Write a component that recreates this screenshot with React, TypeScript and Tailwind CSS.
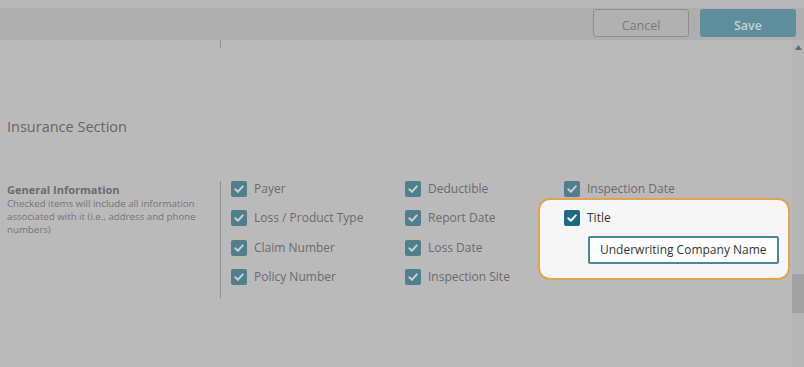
import React from 'react'

function Box({ dark = false }: { dark?: boolean }) {
  return (
    <span
      className={`flex h-4 w-4 shrink-0 items-center justify-center rounded-[2px] ${
        dark ? 'bg-[#1d6a85]' : 'bg-[#4f7f8d]'
      }`}
    >
      <svg width="12" height="12" viewBox="0 0 12 12" fill="none">
        <path
          d="M2.3 6.2 L4.9 8.7 L9.8 3.4"
          stroke={dark ? '#ffffff' : '#c6cfd2'}
          strokeWidth="2"
          strokeLinecap="round"
          strokeLinejoin="round"
        />
      </svg>
    </span>
  )
}

function Item({ label }: { label: string }) {
  return (
    <div className="flex h-[29.5px] items-center gap-[7px]">
      <Box />
      <span className="text-[12px] text-[#6b6a6b]">{label}</span>
    </div>
  )
}

export default function App() {
  const cols = [
    ['Payer', 'Loss / Product Type', 'Claim Number', 'Policy Number'],
    ['Deductible', 'Report Date', 'Loss Date', 'Inspection Site'],
  ]
  return (
    <div
      className="relative flex h-[367px] w-[804px] flex-col overflow-hidden bg-[#bbbabb]"
      style={{ fontFamily: '"Open Sans", sans-serif' }}
    >
      <div className="h-[8px] bg-[#b9b8b9]" />
      <header className="flex h-[32px] items-start justify-end gap-[11px] bg-[#afaeaf] pr-[8px] pt-[1px]">
        <button className="h-[28px] w-[96px] rounded-[3px] border border-[#8f8e8f] bg-[#b2b1b2] pt-[5px] text-[12.5px] leading-[16px] text-[#7a797a]">
          Cancel
        </button>
        <button className="h-[28px] w-[96px] rounded-[3px] bg-[#5e8e9b] pt-[5px] text-[12.5px] font-semibold leading-[16px] text-[#c4d3d7]">
          Save
        </button>
      </header>

      <div className="flex flex-1">
        <main className="flex-1">
          <div className="ml-[220px] h-[8px] border-l border-[#8f8e8f]" />
          <h2 className="mt-[71px] pl-[7px] text-[14.5px] leading-[16px] text-[#666566]">
            Insurance Section
          </h2>

          <section className="mt-[46px] flex">
            <div className="w-[220px] pl-[7px] pt-[2px]">
              <div className="text-[11px] font-bold leading-[14px] text-[#6b6a6b]">
                General Information
              </div>
              <p className="text-[9.7px] leading-[13px] text-[#757475]">
                Checked items will include all information associated with it (i.e., address and phone
                numbers)
              </p>
            </div>
            <div className="flex h-[117px] border-l border-[#8f8e8f] pl-[10px]">
              <div className="-mt-[7px] flex">
                <div className="w-[174px]">
                  {cols[0].map((l) => (
                    <Item key={l} label={l} />
                  ))}
                </div>
                <div className="w-[159px]">
                  {cols[1].map((l) => (
                    <Item key={l} label={l} />
                  ))}
                </div>
                <div className="w-[160px]">
                  <Item label="Inspection Date" />
                </div>
              </div>
            </div>
          </section>
        </main>

        <aside className="relative w-[12px] bg-[#b7b6b7]">
          <svg className="absolute left-[3px] top-[5px]" width="7" height="5" viewBox="0 0 7 5">
            <path d="M3.5 0 L7 5 L0 5 Z" fill="#6a696a" />
          </svg>
          <div className="absolute left-0 right-0 top-[234px] h-[39px] bg-[#a3a2a3]" />
        </aside>
      </div>

      <div className="absolute left-[538px] top-[198px] h-[82px] w-[252px] rounded-[12px] border-2 border-[#e2a24f] bg-[#f7f6f7]">
        <div className="ml-[24px] mt-[9px] flex items-center gap-[7px]">
          <Box dark />
          <span className="text-[12px] text-[#333333]">Title</span>
        </div>
        <div className="ml-[48px] mt-[9px] flex h-[28px] w-[191px] items-center rounded-[2px] border-2 border-[#4a8797] bg-white pl-[10px] text-[12px] text-[#333333]">
          Underwriting Company Name
        </div>
      </div>
    </div>
  )
}
